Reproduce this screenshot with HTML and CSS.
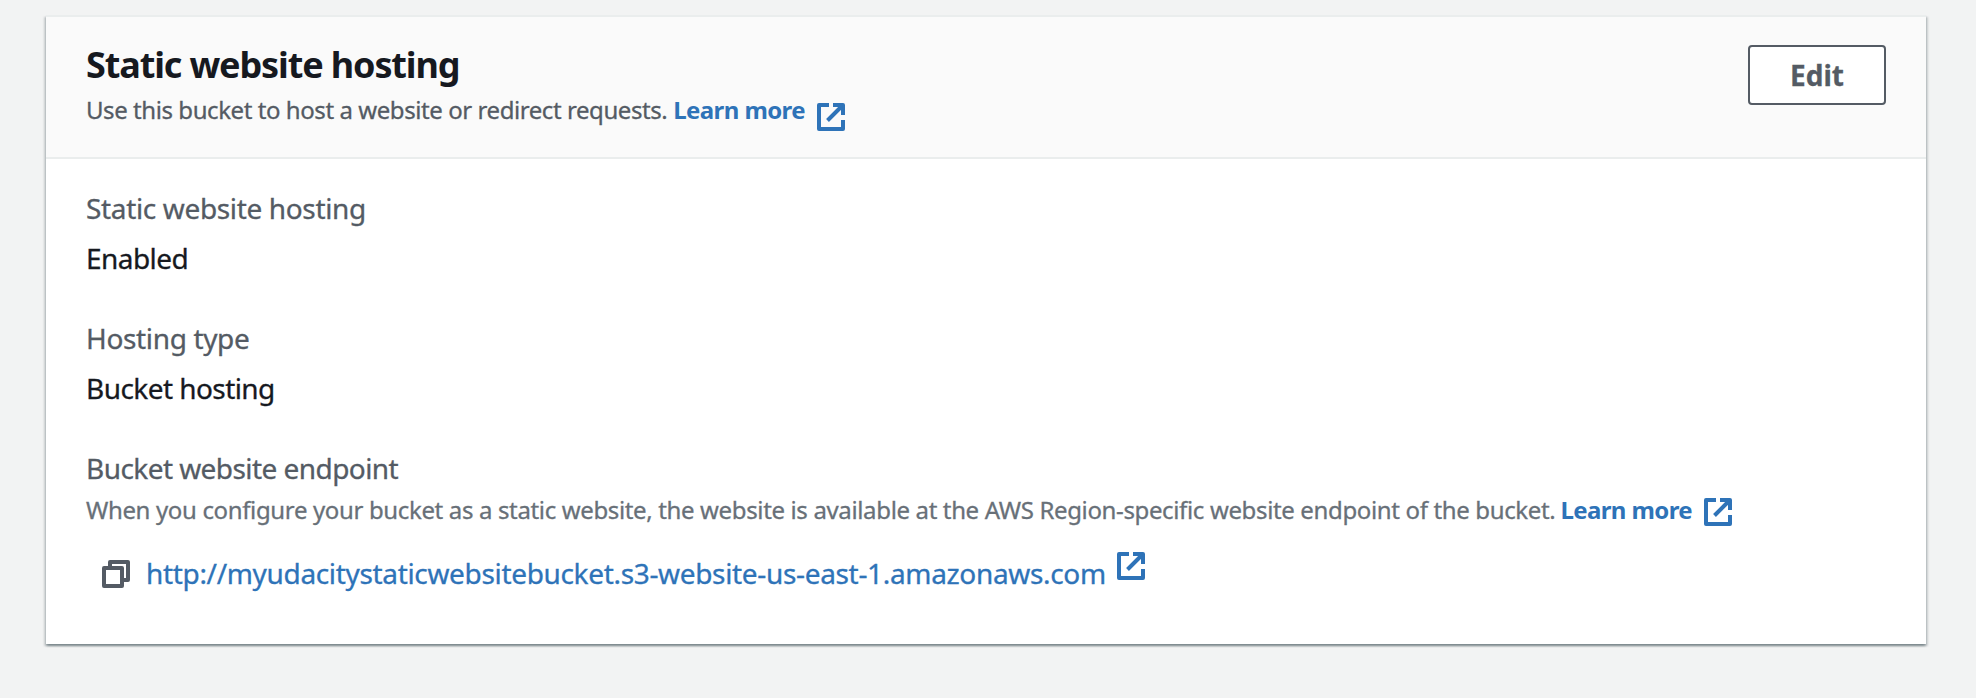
FILE: index.html
```html
<!DOCTYPE html>
<html lang="en">
<head>
<meta charset="utf-8">
<title>Static website hosting</title>
<link rel="stylesheet" href="styles.css">
</head>
<body>
<section class="card">
  <header class="card-header">
    <div class="heading">
      <h2 class="title">Static website hosting</h2>
      <p class="description"><span>Use this bucket to host a website or redirect requests.</span>
        <a class="learn" href="#"><span>Learn more</span><svg class="icon icon-low" viewBox="0 0 28 28"><path d="M12 2H2V26H26V17M16 2H26V12M25 3L10.500 17.500"/></svg></a></p>
    </div>
    <button class="edit" type="button">Edit</button>
  </header>
  <div class="card-body">
    <div class="field">
      <div class="label">Static website hosting</div>
      <div class="value tight">Enabled</div>
    </div>
    <div class="field">
      <div class="label">Hosting type</div>
      <div class="value tight">Bucket hosting</div>
    </div>
    <div class="field">
      <div class="label tight">Bucket website endpoint</div>
      <p class="hint"><span>When you configure your bucket as a static website, the website is available at the AWS Region-specific website endpoint of the bucket.</span>
        <a class="learn" href="#"><span>Learn more</span><svg class="icon icon-mid" viewBox="0 0 28 28"><path d="M12 2H2V26H26V17M16 2H26V12M25 3L10.500 17.500"/></svg></a></p>
      <div class="endpoint">
        <svg class="icon copy" viewBox="0 0 28 28"><path d="M2 8H20V26H2ZM8 8V2H26V20H20"/></svg>
        <a class="url" href="#">http://myudacitystaticwebsitebucket.s3-website-us-east-1.amazonaws.com</a>
        <svg class="icon icon-high" viewBox="0 0 28 28"><path d="M12 2H2V26H26V17M16 2H26V12M25 3L10.500 17.500"/></svg>
      </div>
    </div>
  </div>
</section>
</body>
</html>
```
FILE: styles.css
```css
* { box-sizing: border-box; }
html { background: #f2f3f3; }
body {
  margin: 0;
  min-height: 698px;
  padding: 15px 50px 54px 46px;
  font-family: "Noto Sans", sans-serif;
  font-size: 28px;
  line-height: 40px;
  letter-spacing: -0.35px;
  color: #16191f;
  -webkit-text-stroke-width: 0.3px;
}
h2, p { margin: 0; }
a { color: #2e73b8; text-decoration: none; }

.card {
  height: 629px;
  background: #fff;
  border-top: 2px solid #eaeded;
  box-shadow: 0 2px 2px rgba(0, 28, 36, .3), 2px 2px 2px rgba(0, 28, 36, .15), -2px 2px 2px rgba(0, 28, 36, .15);
}
.card-header {
  display: flex;
  justify-content: space-between;
  align-items: flex-start;
  height: 142px;
  padding: 26px 40px 0;
  background: #fafafa;
  border-bottom: 2px solid #eaeded;
}
.title { font-size: 36px; line-height: 44px; font-weight: 700; letter-spacing: -1.13px; -webkit-text-stroke-width: 0; }
.description, .hint { display: flex; height: 40px; font-size: 24px; white-space: nowrap; }
.description { gap: 6px; margin-top: 3px; color: #545b64; letter-spacing: -0.43px; }
.learn { display: flex; align-items: center; gap: 12px; font-weight: 700; letter-spacing: -0.6px; -webkit-text-stroke-width: 0; }
.edit {
  width: 138px;
  height: 60px;
  margin-top: 2px;
  border: 2px solid #545b64;
  border-radius: 4px;
  background: #fff;
  color: #545b64;
  font: 700 28px "Noto Sans", sans-serif;
}

.card-body { display: flex; flex-direction: column; gap: 40px; padding: 29px 40px 0; }
.label { color: #545b64; }
.value { margin-top: 10px; }
.tight { letter-spacing: -0.56px; }
.hint { gap: 5px; margin-top: 2px; color: #687078; letter-spacing: -0.355px; }
.endpoint { display: flex; align-items: center; height: 40px; margin-top: 23px; padding-left: 16px; white-space: nowrap; }
.url { margin: 0 11px 0 16px; letter-spacing: -0.335px; }

.icon { width: 28px; height: 28px; fill: none; stroke: #2e73b8; stroke-width: 4; stroke-linejoin: round; }
.copy { stroke: #545b64; transform: translateY(1px); }
.icon-low { transform: translateY(7px); }
.icon-mid { transform: translateY(2px); }
.icon-high { transform: translateY(-7px); }
```
